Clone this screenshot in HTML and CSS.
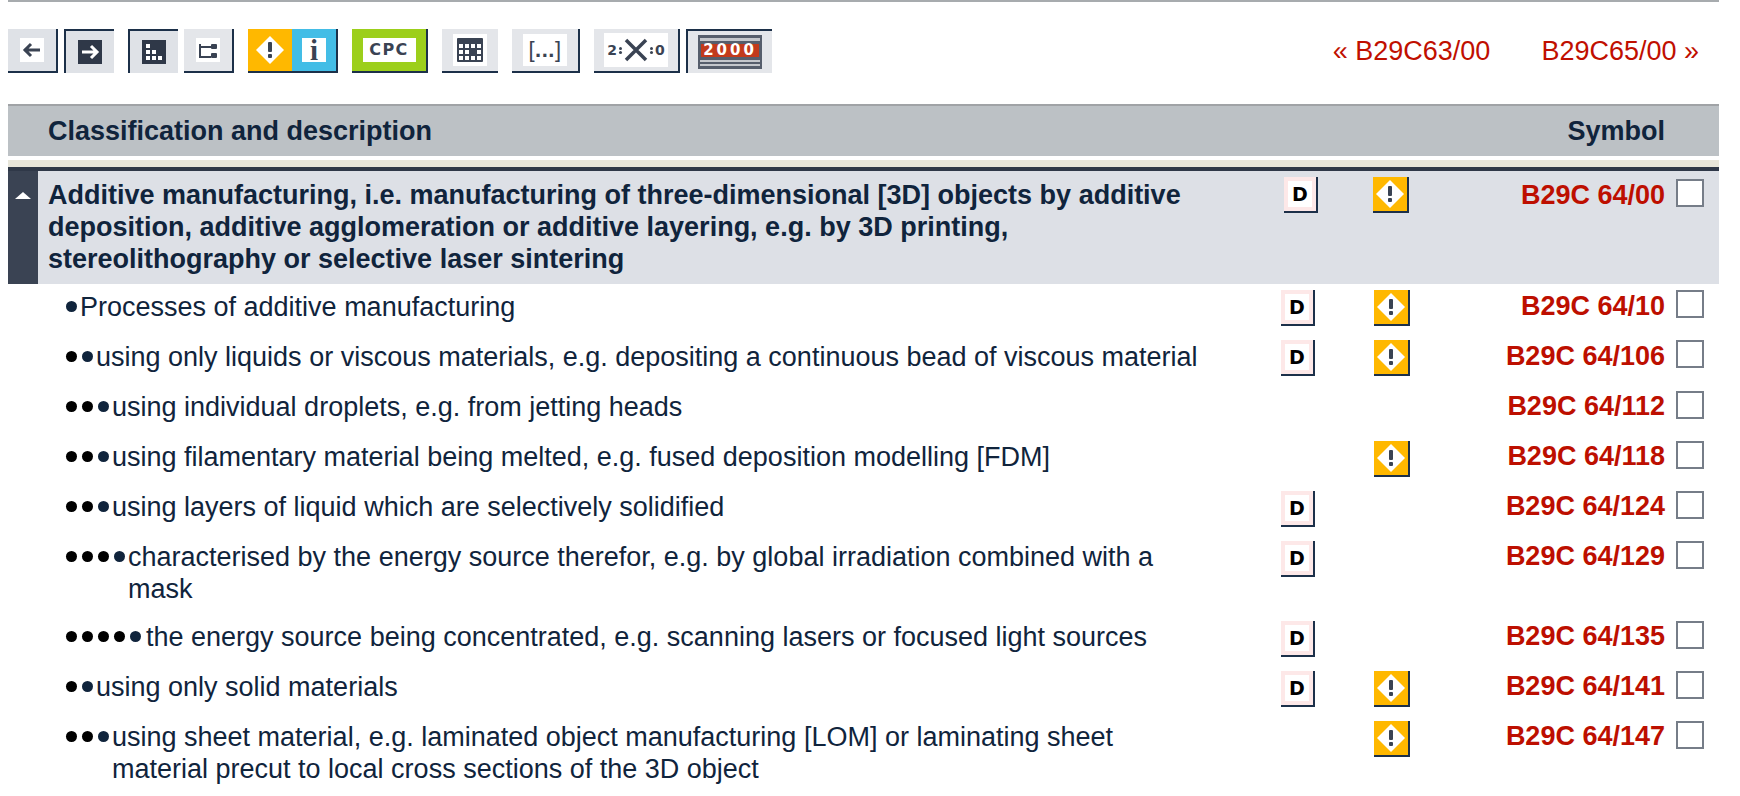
FILE: index.html
```html
<!DOCTYPE html>
<html lang="en">

<head>
    <meta charset="UTF-8">
    <meta name="viewport" content="width=device-width, initial-scale=1.0">
    <title>IPC B29C 64/00</title>
    <link rel="stylesheet" href="styles.css">
</head>

<body>
    <div class="page">
        <div class="toolbar">
            <div class="tools">
                <a class="tool raised w50">
                    <span class="face"><svg width="24" height="24" viewBox="0 0 24 24"><path d="M4 12h16M11 6l-6 6 6 6" fill="none" stroke="#3a4353" stroke-width="3"/></svg></span>
                </a>
                <a class="tool pressed w50 near">
                    <span class="face dark"><svg width="24" height="24" viewBox="0 0 24 24"><path d="M4 12h15M13 6l6 6-6 6" fill="none" stroke="#fff" stroke-width="3"/></svg></span>
                </a>
                <a class="tool pressed w50">
                    <span class="face dark"><svg width="24" height="24" viewBox="0 0 24 24" fill="#fff"><rect x="4" y="4" width="4" height="4"/><rect x="4" y="10" width="4" height="4"/><rect x="10" y="10" width="4" height="4"/><rect x="4" y="16" width="4" height="4"/><rect x="10" y="16" width="4" height="4"/><rect x="16" y="16" width="4" height="4"/></svg></span>
                </a>
                <a class="tool raised w50 near pale">
                    <span class="face"><svg width="24" height="24" viewBox="0 0 24 24"><path d="M4 6v13h11M4 9h11" fill="none" stroke="#3a4353" stroke-width="2"/><rect x="15" y="6" width="6" height="5" rx="1" fill="#3a4353"/><rect x="15" y="15" width="6" height="5" rx="1" fill="#3a4353"/></svg></span>
                </a>
                <a class="tool raised split">
                    <span class="half orange">
                        <svg width="30" height="30" viewBox="0 0 30 30"><path d="M15 1l14 14-14 14L1 15z" fill="#fff"/><rect x="13" y="7" width="4" height="10" rx="1" fill="#3a4353"/><rect x="13" y="19" width="4" height="4" rx="1" fill="#3a4353"/></svg>
                    </span>
                    <span class="half blue"><span class="face info">i</span></span>
                </a>
                <a class="tool raised green cpc-tool">
                    <span class="face cpc">CPC</span>
                </a>
                <a class="tool flat w56 pale">
                    <span class="face wide34"><svg width="26" height="24" viewBox="0 0 26 24"><rect width="26" height="24" rx="1" fill="#3a4353"/><g fill="#fff"><rect x="2" y="6" width="4" height="4"/><rect x="8" y="6" width="4" height="4"/><rect x="14" y="6" width="4" height="4"/><rect x="20" y="6" width="4" height="4"/><rect x="2" y="12" width="4" height="4"/><rect x="8" y="12" width="4" height="4"/><rect x="20" y="12" width="4" height="4"/><rect x="2" y="18" width="4" height="4"/><rect x="8" y="18" width="4" height="4"/><rect x="14" y="18" width="4" height="4"/><rect x="20" y="18" width="4" height="4"/></g></svg></span>
                </a>
                <a class="tool raised w68 pale">
                    <span class="face wide44 dots">[<b>...</b>]</span>
                </a>
                <a class="tool raised w86 pale">
                    <span class="face wide64 times">
                        <span>2</span><i></i><svg width="24" height="24" viewBox="0 0 24 24"><path d="M2 2l20 20M22 2L2 22" fill="none" stroke="#3a4353" stroke-width="3.5"/></svg><i></i><span>0</span>
                    </span>
                </a>
                <a class="tool pressed w86 near pale">
                    <span class="edition"><b>2000</b></span>
                </a>
            </div>
            <div class="pager">
                <a>« B29C63/00</a>
                <a>B29C65/00 »</a>
            </div>
        </div>

        <div class="head">
            <span>Classification and description</span>
            <span>Symbol</span>
        </div>

        <div class="stripe"></div>

        <div class="row main">
            <div class="toggle"><span class="arrow"></span></div>
            <div class="desc">Additive manufacturing, i.e. manufacturing of three-dimensional [3D] objects by additive deposition, additive agglomeration or additive layering, e.g. by 3D printing, stereolithography or selective laser sintering</div>
            <div class="cell"><span class="doc">D</span></div>
            <div class="cell"><span class="warn"><svg width="30" height="30" viewBox="0 0 30 30"><path d="M15 1l14 14-14 14L1 15z" fill="#fff"/><rect x="13" y="7" width="4" height="10" rx="1" fill="#3a4353"/><rect x="13" y="19" width="4" height="4" rx="1" fill="#3a4353"/></svg></span></div>
            <div class="symbol">B29C 64/00</div>
            <div class="cell"><span class="check"></span></div>
        </div>

        <div class="row">
            <div class="desc"><span class="dots-1"></span><span class="txt">Processes of additive manufacturing</span></div>
            <div class="cell"><span class="doc">D</span></div>
            <div class="cell"><span class="warn"><svg width="30" height="30" viewBox="0 0 30 30"><path d="M15 1l14 14-14 14L1 15z" fill="#fff"/><rect x="13" y="7" width="4" height="10" rx="1" fill="#3a4353"/><rect x="13" y="19" width="4" height="4" rx="1" fill="#3a4353"/></svg></span></div>
            <div class="symbol">B29C 64/10</div>
            <div class="cell"><span class="check"></span></div>
        </div>

        <div class="row">
            <div class="desc"><span class="dots-2"></span><span class="txt">using only liquids or viscous materials, e.g. depositing a continuous bead of viscous material</span></div>
            <div class="cell"><span class="doc">D</span></div>
            <div class="cell"><span class="warn"><svg width="30" height="30" viewBox="0 0 30 30"><path d="M15 1l14 14-14 14L1 15z" fill="#fff"/><rect x="13" y="7" width="4" height="10" rx="1" fill="#3a4353"/><rect x="13" y="19" width="4" height="4" rx="1" fill="#3a4353"/></svg></span></div>
            <div class="symbol">B29C 64/106</div>
            <div class="cell"><span class="check"></span></div>
        </div>

        <div class="row low">
            <div class="desc"><span class="dots-3"></span><span class="txt">using individual droplets, e.g. from jetting heads</span></div>
            <div class="cell"></div>
            <div class="cell"></div>
            <div class="symbol">B29C 64/112</div>
            <div class="cell"><span class="check"></span></div>
        </div>

        <div class="row low">
            <div class="desc"><span class="dots-3"></span><span class="txt">using filamentary material being melted, e.g. fused deposition modelling [FDM]</span></div>
            <div class="cell"></div>
            <div class="cell"><span class="warn"><svg width="30" height="30" viewBox="0 0 30 30"><path d="M15 1l14 14-14 14L1 15z" fill="#fff"/><rect x="13" y="7" width="4" height="10" rx="1" fill="#3a4353"/><rect x="13" y="19" width="4" height="4" rx="1" fill="#3a4353"/></svg></span></div>
            <div class="symbol">B29C 64/118</div>
            <div class="cell"><span class="check"></span></div>
        </div>

        <div class="row low">
            <div class="desc"><span class="dots-3"></span><span class="txt">using layers of liquid which are selectively solidified</span></div>
            <div class="cell"><span class="doc">D</span></div>
            <div class="cell"></div>
            <div class="symbol">B29C 64/124</div>
            <div class="cell"><span class="check"></span></div>
        </div>

        <div class="row low">
            <div class="desc"><span class="dots-4"></span><span class="txt">characterised by the energy source therefor, e.g. by global irradiation combined with a mask</span></div>
            <div class="cell"><span class="doc">D</span></div>
            <div class="cell"></div>
            <div class="symbol">B29C 64/129</div>
            <div class="cell"><span class="check"></span></div>
        </div>

        <div class="row low">
            <div class="desc"><span class="dots-5"></span><span class="txt">the energy source being concentrated, e.g. scanning lasers or focused light sources</span></div>
            <div class="cell"><span class="doc">D</span></div>
            <div class="cell"></div>
            <div class="symbol">B29C 64/135</div>
            <div class="cell"><span class="check"></span></div>
        </div>

        <div class="row low">
            <div class="desc"><span class="dots-2"></span><span class="txt">using only solid materials</span></div>
            <div class="cell"><span class="doc">D</span></div>
            <div class="cell"><span class="warn"><svg width="30" height="30" viewBox="0 0 30 30"><path d="M15 1l14 14-14 14L1 15z" fill="#fff"/><rect x="13" y="7" width="4" height="10" rx="1" fill="#3a4353"/><rect x="13" y="19" width="4" height="4" rx="1" fill="#3a4353"/></svg></span></div>
            <div class="symbol">B29C 64/141</div>
            <div class="cell"><span class="check"></span></div>
        </div>

        <div class="row low">
            <div class="desc"><span class="dots-3"></span><span class="txt">using sheet material, e.g. laminated object manufacturing [LOM] or laminating sheet material precut to local cross sections of the 3D object</span></div>
            <div class="cell"></div>
            <div class="cell"><span class="warn"><svg width="30" height="30" viewBox="0 0 30 30"><path d="M15 1l14 14-14 14L1 15z" fill="#fff"/><rect x="13" y="7" width="4" height="10" rx="1" fill="#3a4353"/><rect x="13" y="19" width="4" height="4" rx="1" fill="#3a4353"/></svg></span></div>
            <div class="symbol">B29C 64/147</div>
            <div class="cell"><span class="check"></span></div>
        </div>
    </div>
</body>

</html>
```

FILE: styles.css
```css
body {
    margin: 0;
    background-color: #fff;
    color: #10243c;
    font-family: "Liberation Sans", Arial, sans-serif;
    font-size: 27px;
    line-height: 32px;
    overflow: hidden;
}

.page {
    width: 1711px;
    margin-left: 8px;
    border-top: 2px solid #a7abae;
}

/* toolbar */
.toolbar {
    display: flex;
    justify-content: space-between;
    height: 102px;
    padding-top: 27px;
    box-sizing: border-box;
}

.tools {
    display: flex;
    gap: 14px;
    height: 44px;
}

.tool {
    display: flex;
    align-items: center;
    justify-content: center;
    box-sizing: border-box;
    height: 44px;
    background-color: #dfe2e7;
}

.tool.pale {
    background-color: #e4e6ea;
}

.tool.raised {
    border-right: 2px solid #1c3049;
    border-bottom: 2px solid #1c3049;
}

.tool.flat {
    border-bottom: 2px solid #1c3049;
}

.tool.pressed {
    border-top: 2px solid #1c3049;
    border-left: 2px solid #1c3049;
}

.near {
    margin-left: -8px;
}

.w50 { width: 50px; }
.w56 { width: 56px; }
.w68 { width: 68px; }
.w86 { width: 86px; }

.face {
    display: flex;
    align-items: center;
    justify-content: center;
    width: 24px;
    height: 24px;
    background-color: #fff;
}

.face.dark {
    background-color: #2f3848;
}

.split {
    width: 90px;
    background-color: #ffb800;
}

.half {
    display: flex;
    align-items: center;
    justify-content: center;
    height: 100%;
}

.orange {
    width: 44px;
    background-color: #ffb800;
}

.blue {
    flex: 1;
    background-color: #43bde6;
}

.face.info {
    font-family: "Liberation Serif", serif;
    font-weight: bold;
    font-size: 29px;
    color: #3a4353;
}

.green {
    background-color: #9ccf1b;
}

.cpc-tool {
    width: 76px;
}

.face.cpc {
    width: 53px;
    font-family: "DejaVu Sans", sans-serif;
    font-size: 16px;
    font-weight: bold;
    letter-spacing: 1.5px;
    color: #3a4353;
}

.face.wide34 {
    width: 34px;
    height: 32px;
}

.face.wide44 {
    width: 44px;
    height: 32px;
}

.face.dots {
    font-size: 22px;
    letter-spacing: 0.5px;
    color: #3a4353;
}

.face.wide64 {
    width: 64px;
    height: 34px;
}

.times {
    gap: 2px;
    font-size: 14px;
    font-weight: bold;
    color: #3a4353;
    font-family: "DejaVu Sans", sans-serif;
}

.times i {
    width: 3px;
    height: 3px;
    margin-top: -4px;
    border-radius: 50%;
    background-color: #3a4353;
    box-shadow: 0 4px 0 #3a4353;
}

.edition {
    display: flex;
    align-items: center;
    box-sizing: border-box;
    width: 64px;
    height: 34px;
    padding: 0 1px 3px;
    background: linear-gradient(#565e6c 0 1px, #c4c7cc 1px 4px, #565e6c 4px 23px, #c4c7cc 23px 25px, #565e6c 25px 27px, #c4c7cc 27px 29px, #565e6c 29px);
    background-origin: padding-box;
    border: 2px solid #565e6c;
}

.edition b {
    flex: 1;
    height: 13px;
    background-color: #c23a1c;
    color: #fff;
    font-family: "DejaVu Sans", sans-serif;
    font-size: 15px;
    line-height: 13px;
    letter-spacing: 3px;
    text-align: center;
}

.pager {
    display: flex;
    gap: 51px;
    height: 38px;
    padding-top: 6px;
    margin-right: 20px;
    color: #c00f00;
}

/* table */
.head {
    display: flex;
    justify-content: space-between;
    box-sizing: border-box;
    height: 52px;
    padding: 9px 54px 0 40px;
    background-color: #bcc1c5;
    border-top: 2px solid #a0a3a6;
    font-weight: bold;
}

.stripe {
    height: 7px;
    margin-top: 4px;
    background-color: #e8e6da;
    border-bottom: 4px solid #2f3848;
}

.row {
    display: grid;
    grid-template-columns: 1273px 93px 36px 255px 39px;
    min-height: 50px;
    box-sizing: border-box;
    padding-bottom: 8px;
}

.desc {
    display: flex;
    align-items: flex-start;
    gap: 3px;
    box-sizing: border-box;
    padding: 7px 81px 1px 58px;
}

.cell {
    padding-top: 6px;
}

.low {
    padding-bottom: 7px;
}

.low .cell {
    padding-top: 7px;
}

.low .desc {
    padding-bottom: 2px;
}

.symbol {
    padding-top: 6px;
    color: #bd0f00;
    font-weight: bold;
    text-align: right;
}

.row > .cell:last-child {
    margin-left: 11px;
    width: 28px;
}

.main {
    position: relative;
    height: 113px;
    background-color: #dde0e6;
}

.main .desc {
    display: block;
    padding: 8px 81px 0 40px;
    font-weight: bold;
}

.main .cell:nth-child(3) {
    margin-left: 3px;
}

.main .cell:nth-child(4) {
    margin-left: -1px;
}

.main .symbol {
    padding-top: 8px;
}

.main .cell:last-child {
    padding-top: 8px;
}

.toggle {
    position: absolute;
    left: 0;
    top: 0;
    bottom: 0;
    width: 30px;
    background-color: #3a4353;
}

.arrow {
    position: absolute;
    left: 7px;
    top: 21px;
    border-left: 8px solid transparent;
    border-right: 8px solid transparent;
    border-bottom: 7px solid #fff;
}

.doc {
    display: flex;
    align-items: center;
    justify-content: center;
    box-sizing: border-box;
    width: 34px;
    height: 36px;
    background-color: #fff;
    border-right: 2px solid #1c3049;
    border-bottom: 2px solid #1c3049;
    box-shadow: inset 0 0 0 4px #fde8e8;
    color: #000;
    font-family: "DejaVu Sans", sans-serif;
    font-size: 19px;
    font-weight: bold;
}

.warn {
    display: flex;
    align-items: center;
    justify-content: center;
    box-sizing: border-box;
    width: 36px;
    height: 36px;
    background-color: #ffb800;
    border-right: 2px solid #1c3049;
    border-bottom: 2px solid #1c3049;
}

.check {
    display: block;
    box-sizing: border-box;
    width: 28px;
    height: 28px;
    background-color: #fff;
    border: 2px solid #767d88;
}

/* level dots */
.dots-1, .dots-2, .dots-3, .dots-4, .dots-5 {
    flex: none;
    width: 11px;
    height: 11px;
    margin-top: 10px;
    border-radius: 50%;
    background-color: #10243c;
}

.dots-2 {
    margin-left: 16px;
    box-shadow: -16px 0 0 #000;
}

.dots-3 {
    margin-left: 32px;
    box-shadow: -16px 0 0 #000, -32px 0 0 #000;
}

.dots-4 {
    margin-left: 48px;
    box-shadow: -16px 0 0 #000, -32px 0 0 #000, -48px 0 0 #000;
}

.dots-5 {
    margin-left: 64px;
    margin-right: 2px;
    box-shadow: -16px 0 0 #000, -32px 0 0 #000, -48px 0 0 #000, -64px 0 0 #000;
}
```
